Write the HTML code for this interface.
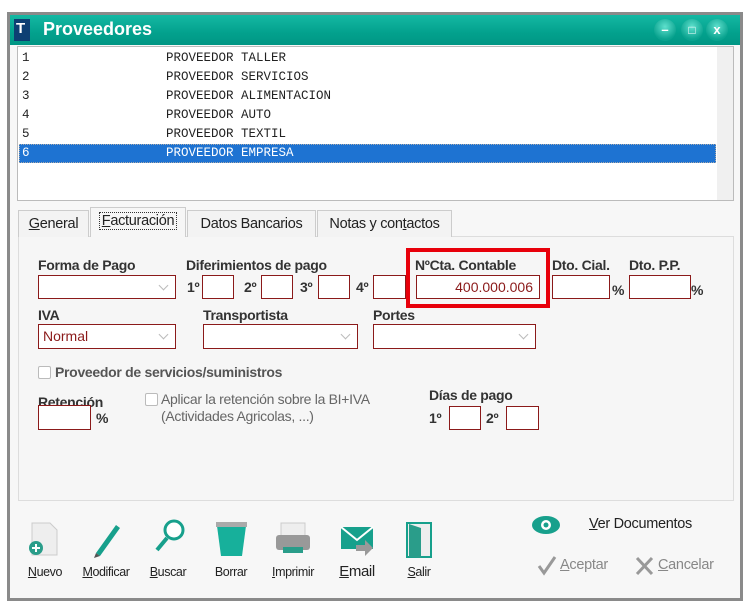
<!DOCTYPE html>
<html><head><meta charset="utf-8"><style>
*{margin:0;padding:0;box-sizing:border-box}
body{width:749px;height:605px;background:#fff;position:relative;overflow:hidden;font-family:"Liberation Sans",Arial,sans-serif;font-size:13.5px;color:#222}
.a{position:absolute}
.lbl{position:absolute;font-weight:bold;font-size:14px;color:#333;letter-spacing:-0.3px}
.box{position:absolute;border:1px solid #8b1a1a;background:#fff}
.sel::after{content:"";position:absolute;right:8px;top:6px;width:6px;height:6px;border-right:1px solid #bbb;border-bottom:1px solid #bbb;transform:rotate(45deg)}
.row{position:absolute;left:22px;font-family:"Liberation Mono",monospace;font-size:12.5px;color:#222;height:19px;line-height:19px}
.row span{position:absolute;left:144px;white-space:nowrap}
.tab{position:absolute;top:210px;height:27px;border:1px solid #ccc;border-bottom:none;background:#f3f3f3;font-size:14.5px;line-height:26px;text-align:center;letter-spacing:-0.3px}
.bl{position:absolute;top:565px;font-size:12.5px;color:#222;letter-spacing:-0.4px;transform:translateX(-50%)}
.circ{position:absolute;top:19px;width:22px;height:22px;border-radius:50%;background:radial-gradient(circle at 50% 35%,#5fe0cd,#0aa38f 70%);color:#fff;font-weight:bold;font-size:13px;text-align:center;line-height:22px}
</style></head><body>
<div class="a" style="left:7px;top:12px;width:736px;height:589px;border:3px solid #8a8a8a;background:#f7f7f7"></div>
<div class="a" style="left:10px;top:15px;width:730px;height:30px;background:linear-gradient(#14b8a3,#03a18d 60%,#009684)"></div>
<div class="a" style="left:14px;top:19px;width:16px;height:22px;background:#0d3f73"></div>
<div class="a" style="left:16px;top:20px;color:#fff;font-weight:bold;font-size:15px">T</div>
<div class="a" style="left:43px;top:19px;color:#fff;font-weight:bold;font-size:18px">Proveedores</div>
<div class="circ" style="left:654px">–</div>
<div class="circ" style="left:681px;font-size:12px">□</div>
<div class="circ" style="left:706px">x</div>
<div class="a" style="left:17px;top:46px;width:717px;height:155px;background:#fff;border:1px solid #bbb"></div>
<div class="a" style="left:717px;top:47px;width:16px;height:153px;background:#f0f0f0"></div>
<div class="a" style="left:19px;top:144px;width:697px;height:19px;background:#1e73d2;border:1px dotted #aaa"></div>
<div class="row" style="top:49px">1<span>PROVEEDOR TALLER</span></div>
<div class="row" style="top:68px">2<span>PROVEEDOR SERVICIOS</span></div>
<div class="row" style="top:87px">3<span>PROVEEDOR ALIMENTACION</span></div>
<div class="row" style="top:106px">4<span>PROVEEDOR AUTO</span></div>
<div class="row" style="top:125px">5<span>PROVEEDOR TEXTIL</span></div>
<div class="row" style="top:144px;color:#fff">6<span>PROVEEDOR EMPRESA</span></div>

<div class="a" style="left:18px;top:236px;width:716px;height:265px;background:#f6f6f6;border:1px solid #ddd"></div>
<div class="tab" style="left:18px;width:71px"><u>G</u>eneral</div>
<div class="tab" style="left:90px;top:207px;height:30px;width:96px;background:#f6f6f6"><span style="border:1px dotted #333;padding:0 2px"><u>F</u>acturación</span></div>
<div class="tab" style="left:187px;width:129px">Datos Bancarios</div>
<div class="tab" style="left:317px;width:135px">Notas y con<u>t</u>actos</div>

<div class="lbl" style="left:38px;top:257px">Forma de Pago</div>
<div class="box sel" style="left:38px;top:275px;width:138px;height:24px"></div>
<div class="lbl" style="left:186px;top:257px">Diferimientos de pago</div>
<div class="lbl" style="left:187px;top:279px">1º</div><div class="box" style="left:202px;top:275px;width:32px;height:24px"></div>
<div class="lbl" style="left:244px;top:279px">2º</div><div class="box" style="left:261px;top:275px;width:32px;height:24px"></div>
<div class="lbl" style="left:300px;top:279px">3º</div><div class="box" style="left:318px;top:275px;width:32px;height:24px"></div>
<div class="lbl" style="left:356px;top:279px">4º</div><div class="box" style="left:373px;top:275px;width:33px;height:24px"></div>
<div class="lbl" style="left:415px;top:257px">NºCta. Contable</div>
<div class="box" style="left:416px;top:275px;width:124px;height:24px;color:#8b1a1a;text-align:right;padding-right:6px;line-height:22px;font-size:14px">400.000.006</div>
<div class="a" style="left:406px;top:248px;width:144px;height:60px;border:4px solid #e8000b"></div>
<div class="lbl" style="left:552px;top:257px">Dto. Cial.</div>
<div class="box" style="left:552px;top:275px;width:58px;height:24px"></div><div class="lbl" style="left:612px;top:282px">%</div>
<div class="lbl" style="left:629px;top:257px">Dto. P.P.</div>
<div class="box" style="left:629px;top:275px;width:62px;height:24px"></div><div class="lbl" style="left:691px;top:282px">%</div>

<div class="lbl" style="left:38px;top:307px">IVA</div>
<div class="box sel" style="left:38px;top:324px;width:138px;height:25px;color:#8b1a1a;padding-left:4px;line-height:23px;font-size:14px">Normal</div>
<div class="lbl" style="left:203px;top:307px">Transportista</div>
<div class="box sel" style="left:203px;top:324px;width:155px;height:25px"></div>
<div class="lbl" style="left:373px;top:307px">Portes</div>
<div class="box sel" style="left:373px;top:324px;width:163px;height:25px"></div>

<div class="a" style="left:38px;top:366px;width:13px;height:13px;border:1px solid #bbb;border-radius:2px;background:#fff"></div>
<div class="lbl" style="left:55px;top:364px;color:#555">Proveedor de servicios/suministros</div>
<div class="lbl" style="left:38px;top:394px">Retención</div>
<div class="box" style="left:38px;top:405px;width:53px;height:25px"></div><div class="lbl" style="left:96px;top:410px">%</div>
<div class="a" style="left:145px;top:393px;width:13px;height:13px;border:1px solid #bbb;border-radius:2px;background:#fff"></div>
<div class="a" style="left:161px;top:391px;color:#666;font-size:14px;line-height:17px;letter-spacing:-0.3px">Aplicar la retención sobre la BI+IVA<br>(Actividades Agricolas, ...)</div>
<div class="lbl" style="left:429px;top:387px">Días de pago</div>
<div class="lbl" style="left:429px;top:410px">1º</div><div class="box" style="left:449px;top:406px;width:32px;height:24px"></div>
<div class="lbl" style="left:486px;top:410px">2º</div><div class="box" style="left:506px;top:406px;width:33px;height:24px"></div>

<svg class="a" style="left:0;top:0" width="749" height="605">
<path d="M32 523h18l7 7v25h-25z" fill="#eee" stroke="#ccc"/><circle cx="36" cy="548" r="7" fill="#2a9d8a"/><path d="M36 544v8M32 548h8" stroke="#fff" stroke-width="2"/>
<path d="M96 553l20-28 4 3-20 28z" fill="#17a08c"/><path d="M94 558l2-5 4 3z" fill="#555"/>
<circle cx="174" cy="530" r="9" fill="#fff" stroke="#17a08c" stroke-width="3"/><path d="M167 538l-10 12" stroke="#17a08c" stroke-width="4"/>
<path d="M217 526h29l-4 30h-21z" fill="#17b09b"/><rect x="216" y="522" width="31" height="5" fill="#aaa"/>
<rect x="281" y="523" width="24" height="14" fill="#eee" stroke="#ccc"/><rect x="276" y="535" width="34" height="15" rx="3" fill="#999"/><rect x="283" y="547" width="20" height="6" fill="#2a9d8a"/>
<rect x="341" y="527" width="32" height="22" fill="#17a08c"/><path d="M341 527l16 13 16-13" stroke="#fff" stroke-width="2" fill="none"/><path d="M356 545h9v-5l8 8-8 8v-5h-9z" fill="#999"/>
<rect x="407" y="523" width="24" height="34" fill="#eee" stroke="#17a08c" stroke-width="2"/><path d="M409 524l12 4v30l-12-1z" fill="#2a9d8a"/>
<ellipse cx="546" cy="525" rx="14" ry="9" fill="#17a08c"/><circle cx="546" cy="525" r="5" fill="#fff"/><circle cx="546" cy="525" r="2.5" fill="#17a08c"/>
<path d="M539 566l5 7 11-16" stroke="#999" stroke-width="3" fill="none"/>
<path d="M637 558l15 16M652 558l-15 16" stroke="#999" stroke-width="3"/>
</svg>
<div class="bl" style="left:45px"><u>N</u>uevo</div>
<div class="bl" style="left:106px"><u>M</u>odificar</div>
<div class="bl" style="left:168px"><u>B</u>uscar</div>
<div class="bl" style="left:231px">Borrar</div>
<div class="bl" style="left:293px"><u>I</u>mprimir</div>
<div class="bl" style="left:357px;top:563px;font-size:15px"><u>E</u>mail</div>
<div class="bl" style="left:419px"><u>S</u>alir</div>
<div class="a" style="left:589px;top:516px;font-size:14.5px;letter-spacing:-0.3px"><u>V</u>er Documentos</div>
<div class="a" style="left:560px;top:557px;font-size:14.5px;color:#888;letter-spacing:-0.3px"><u>A</u>ceptar</div>
<div class="a" style="left:658px;top:557px;font-size:14.5px;color:#888;letter-spacing:-0.3px"><u>C</u>ancelar</div>
</body></html>
